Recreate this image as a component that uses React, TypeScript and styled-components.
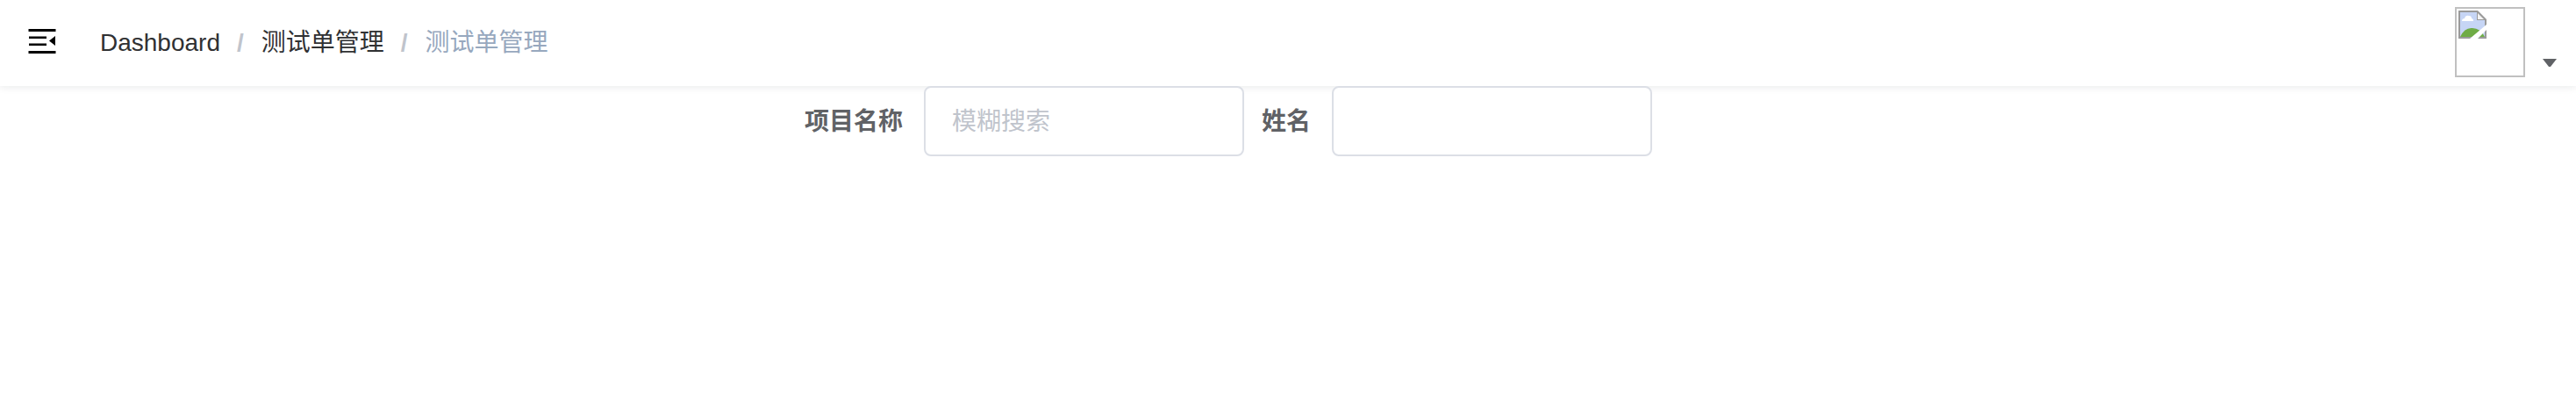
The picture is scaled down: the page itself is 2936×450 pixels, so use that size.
import React from "react";
import styled, { createGlobalStyle } from "styled-components";

const GlobalStyle = createGlobalStyle`
  *, *::before, *::after { box-sizing: border-box; }
  body {
    margin: 0;
    background: #fff;
    color: #303133;
    font-family: "Liberation Sans", "Noto Sans CJK SC", sans-serif;
    font-size: 28px;
  }
  button, input { font: inherit; color: inherit; }
`;

const Navbar = styled.header`
  display: flex;
  align-items: center;
  height: 98px;
  background: #fff;
  box-shadow: 0 2px 8px rgba(0, 21, 41, 0.08);
`;

const IconButton = styled.button`
  display: flex;
  align-items: center;
  padding: 0 28px;
  height: 100%;
  border: 0;
  background: none;
  cursor: pointer;
`;

const Crumbs = styled.ol`
  display: flex;
  align-items: center;
  margin: 0;
  padding: 0 0 0 18px;
  list-style: none;
  line-height: 40px;
`;

const Crumb = styled.li`
  display: flex;
  white-space: nowrap;

  & + &::before {
    content: "/";
    margin: 0 20px 0 19px;
    color: #c0c4cc;
    font-weight: 700;
  }
`;

const CrumbLink = styled.a`
  color: #303133;
  text-decoration: none;
`;

const CrumbCurrent = styled.span`
  color: #97a8be;
`;

const UserMenu = styled.button`
  display: flex;
  align-items: flex-end;
  align-self: flex-start;
  gap: 20px;
  margin-left: auto;
  padding: 8px 22px 0 0;
  border: 0;
  background: none;
  cursor: pointer;
`;

const Avatar = styled.span`
  display: block;
  width: 80px;
  height: 80px;
  padding: 2px;
  border: 2px solid #c0c0c0;
`;

const Picture = styled.svg`
  display: block;
`;

const Caret = styled.svg`
  display: block;
  margin-bottom: 11px;
`;

const FilterForm = styled.form`
  display: flex;
  justify-content: center;
  gap: 20px;
  padding-right: 136px;
`;

const Field = styled.div`
  display: flex;
  align-items: center;
  gap: 24px;
`;

const Label = styled.label`
  padding-top: 2px;
  color: #606266;
  font-weight: 700;
  line-height: 40px;
  white-space: nowrap;
`;

const TextInput = styled.input`
  width: 365px;
  height: 80px;
  padding: 2px 30px 0;
  border: 2px solid #dcdfe6;
  border-radius: 8px;
  background: #fff;
  color: #606266;
  outline: none;

  &::placeholder {
    color: #c0c4cc;
    opacity: 1;
  }
`;

const FoldIcon = () => (
  <svg width="40" height="40" viewBox="0 0 40 40" aria-hidden="true">
    <path d="M4.5 4h31v3h-31zM5 12.5h20v2.5H5zM5 20.5h20V23H5zM4.5 29h31v3h-31zM28 17.5 35 12v11z" />
  </svg>
);

const BrokenImageIcon = () => (
  <Picture width="32" height="32" viewBox="0 0 32 32" aria-hidden="true">
    <path d="M0 0h22l10 10v22H0z" fill="#9a9a9a" />
    <path d="M2 2h19v9h9v19H2z" fill="#c6d5f5" />
    <path d="M22 3v7h7z" fill="#f4f4f4" />
    <path d="M4 12q0-3 3-3 1-4 5-3 3 0 3 3 2 0 2 3z" fill="#fff" />
    <path d="M2 30q5-11 14-10 9 0 14 10z" fill="#6fac46" />
    <path d="M32 16v6L22 32h-9z" fill="#fff" />
  </Picture>
);

export default function App() {
  return (
    <>
      <GlobalStyle />
      <Navbar>
        <IconButton type="button" aria-label="Toggle sidebar">
          <FoldIcon />
        </IconButton>
        <nav aria-label="Breadcrumb">
          <Crumbs>
            <Crumb><CrumbLink href="#/dashboard">Dashboard</CrumbLink></Crumb>
            <Crumb><CrumbLink href="#/test">测试单管理</CrumbLink></Crumb>
            <Crumb><CrumbCurrent aria-current="page">测试单管理</CrumbCurrent></Crumb>
          </Crumbs>
        </nav>
        <UserMenu type="button" aria-label="User menu">
          <Avatar><BrokenImageIcon /></Avatar>
          <Caret width="16" height="10" viewBox="0 0 16 10" aria-hidden="true">
            <path d="M0 0h16L9 9H7z" fill="#606266" />
          </Caret>
        </UserMenu>
      </Navbar>
      <main>
        <FilterForm>
          <Field>
            <Label htmlFor="project">项目名称</Label>
            <TextInput id="project" type="text" placeholder="模糊搜索" />
          </Field>
          <Field>
            <Label htmlFor="name">姓名</Label>
            <TextInput id="name" type="text" />
          </Field>
        </FilterForm>
      </main>
    </>
  );
}
